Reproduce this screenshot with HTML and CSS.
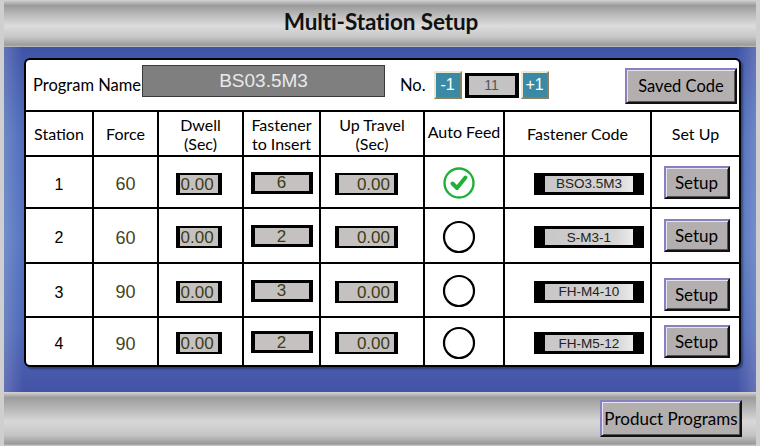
FILE: index.html
```html
<!DOCTYPE html>
<html>
<head>
<meta charset="utf-8">
<link rel="stylesheet" href="styles.css">
</head>
<body>
<div class="app">
  <header class="titlebar"><h1 class="title">Multi-Station Setup</h1></header>
  <main class="panel">
    <section class="card">
      <div class="toprow">
        <span class="label">Program Name</span>
        <div class="progname">BS03.5M3</div>
        <span class="label no">No.</span>
        <button class="step">-1</button>
        <div class="numfield">11</div>
        <button class="step">+1</button>
        <span class="spacer"></span>
        <button class="btn saved">Saved Code</button>
      </div>
      <div class="grid">
        <div class="hd c1">Station</div>
        <div class="hd">Force</div>
        <div class="hd">Dwell<br>(Sec)</div>
        <div class="hd">Fastener<br>to Insert</div>
        <div class="hd">Up Travel<br>(Sec)</div>
        <div class="hd up">Auto Feed</div>
        <div class="hd">Fastener Code</div>
        <div class="hd">Set Up</div>

        <div class="cell c1 num">1</div>
        <div class="cell force">60</div>
        <div class="cell"><div class="fld dwell">0.00</div></div>
        <div class="cell"><div class="fld ins">6</div></div>
        <div class="cell"><div class="fld upt">0.00</div></div>
        <div class="cell"><svg class="chk" width="34" height="34" viewBox="0 0 34 34"><circle cx="17" cy="17" r="14.5" fill="none" stroke="#1fb03a" stroke-width="2.4"/><path d="M10.5 17.5 L15 22 L23.5 11.5" fill="none" stroke="#1fb03a" stroke-width="4" stroke-linecap="round" stroke-linejoin="round"/></svg></div>
        <div class="cell code"><div class="codefld">BSO3.5M3</div></div>
        <div class="cell"><button class="btn setup">Setup</button></div>

        <div class="cell c1 num">2</div>
        <div class="cell force">60</div>
        <div class="cell"><div class="fld dwell">0.00</div></div>
        <div class="cell"><div class="fld ins">2</div></div>
        <div class="cell"><div class="fld upt">0.00</div></div>
        <div class="cell"><svg class="chk" width="34" height="34" viewBox="0 0 34 34"><circle cx="17" cy="17" r="15" fill="none" stroke="#000" stroke-width="2.2"/></svg></div>
        <div class="cell code"><div class="codefld">S-M3-1</div></div>
        <div class="cell"><button class="btn setup">Setup</button></div>

        <div class="cell c1 num">3</div>
        <div class="cell force">90</div>
        <div class="cell"><div class="fld dwell">0.00</div></div>
        <div class="cell"><div class="fld ins">3</div></div>
        <div class="cell"><div class="fld upt">0.00</div></div>
        <div class="cell"><svg class="chk" width="34" height="34" viewBox="0 0 34 34"><circle cx="17" cy="17" r="15" fill="none" stroke="#000" stroke-width="2.2"/></svg></div>
        <div class="cell code"><div class="codefld">FH-M4-10</div></div>
        <div class="cell low"><button class="btn setup">Setup</button></div>

        <div class="cell c1 num">4</div>
        <div class="cell force">90</div>
        <div class="cell"><div class="fld dwell">0.00</div></div>
        <div class="cell"><div class="fld ins">2</div></div>
        <div class="cell"><div class="fld upt">0.00</div></div>
        <div class="cell"><svg class="chk" width="34" height="34" viewBox="0 0 34 34"><circle cx="17" cy="17" r="15" fill="none" stroke="#000" stroke-width="2.2"/></svg></div>
        <div class="cell code"><div class="codefld">FH-M5-12</div></div>
        <div class="cell"><button class="btn setup">Setup</button></div>
      </div>
    </section>
  </main>
  <footer class="footbar"><button class="btn prod">Product Programs</button></footer>
</div>
</body>
</html>
```
FILE: styles.css
```css
* { box-sizing: border-box; }
html, body { margin: 0; padding: 0; }
body { width: 760px; height: 446px; overflow: hidden; background: #c6c6c6; font-family: Lato, "Open Sans", sans-serif; }
.app { width: 760px; height: 446px; display: flex; flex-direction: column; padding: 0 4px 0 4px; background: #cfcfcf; }
.titlebar { height: 47px; display: flex; align-items: center; justify-content: center; padding-bottom: 4px;
  background: linear-gradient(#d2d2d2 0, #9a9a9a 12%, #b8b8b8 30%, #dcdcdc 55%, #c8c8c8 78%, #9b9b9b 96%, #c0c0c0 100%); }
.title { margin: 0; font-size: 22.5px; font-weight: 700; color: #111; letter-spacing: -0.1px; padding-left: 2px; }
.panel { height: 345px; padding: 11px 14px 0 20px;
  background: linear-gradient(90deg, rgba(255,255,255,0.18), rgba(255,255,255,0) 2.5%, rgba(255,255,255,0) 97.5%, rgba(255,255,255,0.18)),
  linear-gradient(#3f54a7 0, #4f6dba 25%, #5675c0 55%, #4e68b6 82%, #4453a6 100%); }
.card { width: 717px; height: 309px; background: #fff; border: 2px solid #000; border-radius: 6px; display: flex; flex-direction: column;
  box-shadow: 2px 2px 2px rgba(0,0,0,0.35); overflow: hidden; }
.toprow { height: 50px; display: flex; align-items: center; padding: 0 0 0 7px; }
.label { font-size: 16.5px; color: #000; }
.progname { width: 243px; height: 32px; margin: -8px 0 0 1px; background: #7f7f7f; border: 1px solid #3a3a3a; color: #e9e9e9;
  font-family: "Liberation Sans", Arial, sans-serif; font-size: 19px; display: flex; align-items: center; justify-content: center; }
.no { margin-left: 15px; margin-right: 8px; }
.step { width: 28px; height: 28px; padding: 0; background: #3a8aa5; color: #fff; font-family: "Liberation Sans", Arial, sans-serif; font-size: 16px;
  border: 2px solid; border-color: #ece8d4 #8a7f5e #8a7f5e #ece8d4; }
.numfield { width: 54px; height: 25px; margin: 0 2px 0 3px; background: #c4c2c2; border: 3px solid #000; border-width: 3px 4px; color: #555;
  font-family: "Liberation Sans", Arial, sans-serif; font-size: 14px; display: flex; align-items: center; justify-content: center; }
.spacer { flex: 1; }
.btn { background: #b3afaf; color: #000; font-family: Lato, "Open Sans", sans-serif; padding: 0; border: 2px solid;
  border-color: #8a80c0 #111 #111 #8a80c0; box-shadow: inset 1px 1px 0 #e6e4ee, inset -1px -1px 0 #555; }
.saved { width: 112px; height: 36px; margin: 2px 2px 0 0; font-size: 16.5px; }
.grid { flex: 1; display: grid; grid-template-columns: 66px 65px 85px 77px 104px 80px 147px 89px; grid-template-rows: 45px 52px 55px 54px 49px; }
.hd, .cell { border-top: 2px solid #000; border-left: 2px solid #000; display: flex; align-items: center; justify-content: center; text-align: center; }
.c1 { border-left: 0; }
.hd { font-size: 16px; line-height: 19px; color: #000; }
.hd.up { padding-bottom: 4px; }
.num { font-family: "Liberation Sans", Arial, sans-serif; font-size: 16px; padding-top: 5px; }
.force { font-family: "Liberation Sans", Arial, sans-serif; font-size: 18px; color: #45441c; padding-top: 5px; }
.fld { height: 22px; background: #c5c1c1; border: 2px solid #000; border-width: 2px 4px; color: #3d3c12;
  font-family: "Liberation Sans", Arial, sans-serif; font-size: 17px; display: flex; align-items: flex-end; line-height: 17px; overflow: hidden; }
.dwell { width: 46px; justify-content: flex-start; padding-left: 1px; margin: 3px 4px 0 0; }
.ins { width: 62px; justify-content: center; align-items: center; border-width: 3px 4px; margin-top: 1px; }
.upt { width: 63px; justify-content: flex-end; padding-right: 4px; margin: 3px 11px 0 0; }
.chk { display: block; margin: 2px 11px 0 0; }
.code { justify-content: flex-end; padding-right: 6px; }
.codefld { width: 110px; height: 22px; background: linear-gradient(90deg, #c8c6c6, #d6d4d4 80%, #ecebeb); border: 2px solid #000; border-width: 3px 11px;
  font-family: "Liberation Sans", Arial, sans-serif; font-size: 13.5px; color: #222; display: flex; align-items: center; justify-content: center; margin-top: 3px; }
.setup { width: 66px; height: 33px; font-size: 17px; margin-left: 2px; }
.low { padding-top: 8px; }
.footbar { flex: 1; display: flex; align-items: center; justify-content: flex-end; padding: 0 14px 2px 0;
  background: linear-gradient(#d6d6d6 0, #9c9c9c 10%, #b6b6b6 30%, #d8d8d8 55%, #c4c4c4 80%, #999 96%, #cfcfcf 100%); }
.prod { width: 142px; height: 37px; font-size: 17px; margin-top: 0; }
```
